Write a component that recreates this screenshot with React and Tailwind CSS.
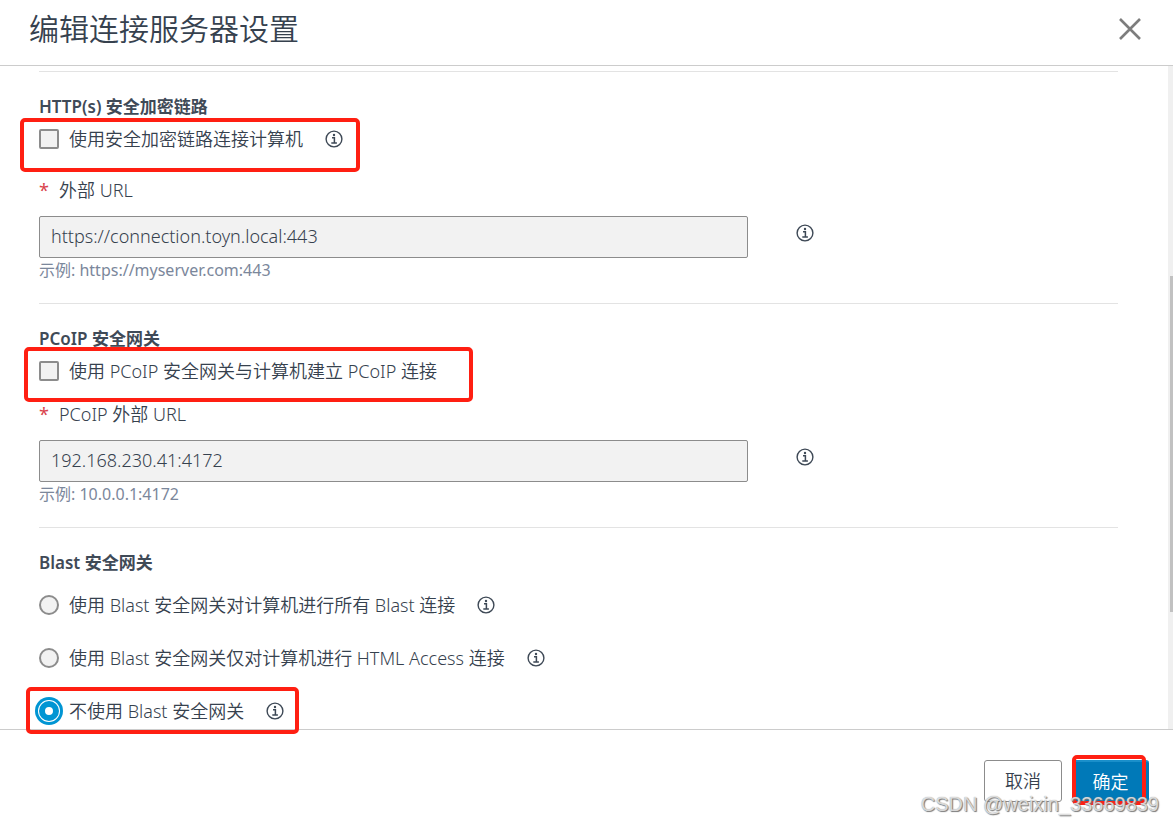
function InfoButton() {
  return (
    <button type="button" aria-label="info" className="h-[18px] w-[18px] shrink-0 text-[#3d4855]">
      <svg viewBox="0 0 18 18" className="h-[18px] w-[18px]" fill="none" stroke="currentColor">
        <circle cx="9" cy="9" r="7.9" strokeWidth="1.4" />
        <circle cx="9" cy="5" r="1.2" fill="currentColor" stroke="none" />
        <path d="M7 7.8h2.4v5.2M6.3 13.1h5.6" strokeWidth="1.5" />
      </svg>
    </button>
  );
}

function Highlight({ className }) {
  return (
    <span
      aria-hidden="true"
      className={`pointer-events-none absolute rounded-[5px] border-4 border-[#ff1f12] ${className}`}
    />
  );
}

function Section({ title, children }) {
  return (
    <section className="border-t border-[#e3e3e3] pt-[23px]">
      <h2 className="text-[17px] font-semibold text-[#3f4a57]">{title}</h2>
      {children}
    </section>
  );
}

function CheckRow({ id, label, info, highlight }) {
  return (
    <div className="relative mt-2 flex w-fit items-center">
      <input
        id={id}
        type="checkbox"
        className="h-5 w-5 appearance-none rounded-[2px] border-2 border-[#8c8c8c] bg-[#f2f2f2]"
      />
      <label htmlFor={id} className="pl-2.5">{label}</label>
      {info && (
        <span className="ml-[22px] flex">
          <InfoButton />
        </span>
      )}
      <Highlight className={highlight} />
    </div>
  );
}

function UrlField({ id, label, value, example }) {
  return (
    <div className="pb-[21px]">
      <label htmlFor={id} className="flex">
        <span className="w-5 font-normal text-[#d9434b]">*</span>
        {label}
      </label>
      <div className="mt-[14px] flex">
        <div className="w-2/3 pr-2.5">
          <input
            id={id}
            type="text"
            defaultValue={value}
            className="block h-[42px] w-full rounded-[2px] border border-[#8c8c8c] bg-[#f2f2f2] px-[11px] pb-0.5"
          />
        </div>
        <div className="ml-[38px] flex items-start pt-2">
          <InfoButton />
        </div>
      </div>
      <p className="text-[16px] font-normal text-[#7b879b]">{example}</p>
    </div>
  );
}

const blastOptions = [
  { id: "all", label: "使用 Blast 安全网关对计算机进行所有 Blast 连接" },
  { id: "html", label: "使用 Blast 安全网关仅对计算机进行 HTML Access 连接" },
  { id: "none", label: "不使用 Blast 安全网关", selected: true },
];

function App() {
  return (
    <div className="relative flex h-screen min-h-[823px] flex-col bg-white font-['Noto_Sans','Noto_Sans_CJK_SC',sans-serif] text-[18px] font-[350] leading-6 text-[#36414e]">
      <header className="flex h-[66px] shrink-0 items-center justify-between border-b border-[#cccccc] pr-8 pb-2 pl-[29px]">
        <h1 className="text-[30px] leading-9">编辑连接服务器设置</h1>
        <button type="button" aria-label="关闭" className="text-[#7d7d7d]">
          <svg viewBox="0 0 22 22" className="h-[22px] w-[22px]" stroke="currentColor" strokeWidth="2.6">
            <path d="M1 1l20 20M21 1L1 21" />
          </svg>
        </button>
      </header>

      <div className="flex flex-1">
        <main className="flex-1 pt-[5px] pr-[50px] pl-[39px]">
          <Section title="HTTP(s) 安全加密链路">
            <div className="pb-[27px]">
              <CheckRow
                id="http-tunnel"
                label="使用安全加密链路连接计算机"
                info
                highlight="-top-[9px] -right-[17px] -bottom-[21px] -left-[19px]"
              />
            </div>
            <UrlField
              id="http-url"
              label="外部 URL"
              value="https://connection.toyn.local:443"
              example="示例: https://myserver.com:443"
            />
          </Section>

          <Section title="PCoIP 安全网关">
            <div className="pb-[19px]">
              <CheckRow
                id="pcoip-gateway"
                label="使用 PCoIP 安全网关与计算机建立 PCoIP 连接"
                highlight="-top-[12px] -right-[36px] -bottom-[19px] -left-[15px]"
              />
            </div>
            <UrlField
              id="pcoip-url"
              label="PCoIP 外部 URL"
              value="192.168.230.41:4172"
              example="示例: 10.0.0.1:4172"
            />
          </Section>

          <Section title="Blast 安全网关">
            <div className="mt-[18px] flex flex-col gap-[29px]">
              {blastOptions.map((option) => (
                <div key={option.id} className="relative flex w-fit items-center">
                  <input
                    id={option.id}
                    type="radio"
                    name="blast"
                    defaultChecked={option.selected}
                    className="h-5 w-5 appearance-none rounded-full border-2 border-[#8c8c8c] bg-[#f2f2f2] checked:border-[6px] checked:border-[#0095d3] checked:bg-white checked:shadow-[0_0_0_1px_#ffffff,0_0_0_4px_#0095d3]"
                  />
                  <label htmlFor={option.id} className="pl-2.5">{option.label}</label>
                  <span className="ml-[22px] flex">
                    <InfoButton />
                  </span>
                  {option.selected && (
                    <Highlight className="-top-[12px] -right-[15px] -bottom-[11px] -left-[13px]" />
                  )}
                </div>
              ))}
            </div>
          </Section>
        </main>

        {/* Scrollbar */}
        <div className="w-[5px] bg-[#f0f0f0] pt-[210px] pl-0.5">
          <div className="h-[336px] bg-[#c1c1c1]" />
        </div>
      </div>

      <footer className="flex h-[94px] shrink-0 items-start justify-end gap-[10px] border-t border-[#cccccc] pt-[30px] pr-6">
        <button type="button" className="h-[42px] w-[78px] rounded-[3px] border border-[#8c8c8c]">
          取消
        </button>
        <div className="relative">
          <button
            type="button"
            className="h-[42px] w-[77px] rounded-[3px] border-t-2 border-[#1a8fca] bg-[#0079b8] text-white"
          >
            确定
          </button>
          <Highlight className="-top-[5px] right-[3px] -bottom-[3px] left-0" />
        </div>
      </footer>

      <span className="pointer-events-none absolute right-[14px] bottom-[7px] font-['Liberation_Sans',sans-serif] text-[20px] font-normal text-white/70 [text-shadow:1px_1px_1px_#777777,0_0_1px_#888888]">
        CSDN @weixin_33669839
      </span>
    </div>
  );
}

export default App;
